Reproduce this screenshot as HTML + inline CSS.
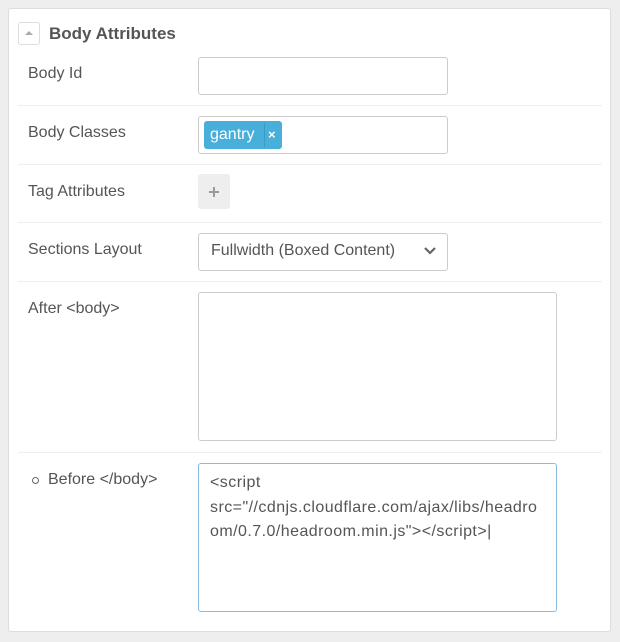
<!DOCTYPE html><html><head><style>
body{margin:0;width:620px;height:642px;background:#eee;font-family:"Liberation Sans",sans-serif;color:#555;position:relative;overflow:hidden}
.a{position:absolute}
.panel{left:8px;top:8px;width:603px;height:624px;background:#fff;border:1px solid #ddd;border-radius:3px;box-sizing:border-box}
.lbl{left:28px;font-size:16px;color:#555}
.sep{left:18px;width:584px;height:1px;background:#eee}
.inp{border:1px solid #ccc;border-radius:3px;background:#fff;box-sizing:border-box}
</style></head><body>
<div class="a panel"></div>
<div class="a inp" style="left:18px;top:22px;width:22px;height:23px;border-color:#ddd"></div>
<div class="a" style="left:25px;top:31px;width:0;height:0;border-left:4px solid transparent;border-right:4px solid transparent;border-bottom:4px solid #aaa"></div>
<div class="a" style="left:49px;top:24px;font-size:17px;font-weight:bold;color:#555">Body Attributes</div>

<div class="a lbl" style="top:65px">Body Id</div>
<div class="a inp" style="left:198px;top:57px;width:250px;height:38px"></div>
<div class="a sep" style="top:105px"></div>

<div class="a lbl" style="top:124px">Body Classes</div>
<div class="a inp" style="left:198px;top:116px;width:250px;height:38px"></div>
<div class="a" style="left:204px;top:121px;width:78px;height:28px;background:#47afd9;border-radius:3px;color:#fff;font-size:16px">
<span class="a" style="left:6px;top:5px">gantry</span>
<span class="a" style="left:60px;top:2px;width:1px;height:24px;background:#3a9cc4"></span>
<span class="a" style="left:64px;top:6px;font-size:13px;font-weight:bold">×</span></div>
<div class="a sep" style="top:164px"></div>

<div class="a lbl" style="top:183px">Tag Attributes</div>
<div class="a" style="left:198px;top:174px;width:32px;height:35px;background:#eee;border-radius:3px"></div>
<div class="a" style="left:209px;top:191px;width:10px;height:2px;background:#999"></div>
<div class="a" style="left:213px;top:187px;width:2px;height:10px;background:#999"></div>
<div class="a sep" style="top:222px"></div>

<div class="a lbl" style="top:241px">Sections Layout</div>
<div class="a inp" style="left:198px;top:233px;width:250px;height:38px"></div>
<div class="a" style="left:211px;top:242px;font-size:16px;color:#555">Fullwidth (Boxed Content)</div>
<svg class="a" style="left:424px;top:246px" width="12" height="10"><path d="M1 2 L6 7 L11 2" stroke="#666" stroke-width="2.2" fill="none"/></svg>
<div class="a sep" style="top:281px"></div>

<div class="a lbl" style="top:300px">After &lt;body&gt;</div>
<div class="a inp" style="left:198px;top:292px;width:359px;height:149px"></div>
<div class="a sep" style="top:452px"></div>

<div class="a" style="left:32px;top:477px;width:5px;height:5px;border:1px solid #666;border-radius:50%"></div>
<div class="a lbl" style="left:48px;top:471px">Before &lt;/body&gt;</div>
<div class="a inp" style="left:198px;top:463px;width:359px;height:149px;border-color:#8cbbe0"></div>
<div class="a" style="left:210px;top:471px;font-size:16px;letter-spacing:0.45px;line-height:24.5px;color:#555;white-space:nowrap">&lt;script<br>src="//cdnjs.cloudflare.com/ajax/libs/headro<br>om/0.7.0/headroom.min.js"&gt;&lt;/script&gt;|</div>
</body></html>
